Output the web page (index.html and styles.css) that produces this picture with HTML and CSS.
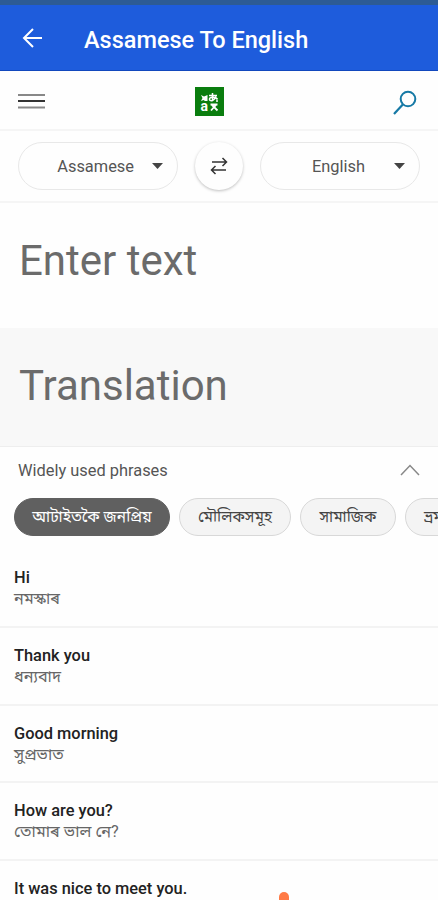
FILE: index.html
```html
<!DOCTYPE html>
<html lang="en">
<head>
    <meta charset="UTF-8">
    <meta name="viewport" content="width=device-width, initial-scale=1.0">
    <title>Assamese To English</title>
    <link rel="stylesheet" href="styles.css">
</head>
<body>

<div class="status-bar"></div>

<header class="app-bar">
    <svg class="back-icon" width="22" height="22" viewBox="0 0 22 22">
        <path d="M20 11H2.500M11 2L2 11l9 9" fill="none" stroke="#fff" stroke-width="2"/>
    </svg>
    <h1>Assamese To English</h1>
</header>

<nav class="top-nav">
    <svg class="menu-icon" width="27" height="18" viewBox="0 0 27 18">
        <path d="M0 3h27M0 15.500h27" stroke="#888" stroke-width="2.200"/>
        <path d="M0 9h27" stroke="#333" stroke-width="2"/>
    </svg>
    <svg class="logo" width="29" height="29" viewBox="0 0 29 29">
        <rect width="29" height="29" fill="#0a7d0e"/>
        <path d="M6 8l3 1.500L12.500 8v6H10l-1.500-1L6 14l1.500-3z" fill="#fff"/>
        <path d="M14 8.500h8M17.500 6v8M21 9.500c-1 4-6 5.500-6.500 3s5.500-3.500 8-.5M22 12.500V15" fill="none" stroke="#fff" stroke-width="1.500"/>
        <text x="5.500" y="23.500" class="logo-text">a</text>
        <path d="M15.500 17.500h7M21 18l-5 5.500M17 18l5.500 5.500" fill="none" stroke="#fff" stroke-width="1.800"/>
    </svg>
    <svg class="search-icon" width="24" height="26" viewBox="0 0 24 26">
        <circle cx="15" cy="9" r="7.300" fill="none" stroke="#1679a5" stroke-width="2"/>
        <path d="M9.800 14.500L1 24" stroke="#1679a5" stroke-width="2.200"/>
    </svg>
</nav>

<div class="languages">
    <div class="select from">
        <span>Assamese</span>
        <svg width="11" height="6" viewBox="0 0 11 6"><path d="M0 0h11L5.500 6z" fill="#444"/></svg>
    </div>
    <div class="swap">
        <svg width="18" height="18" viewBox="0 0 18 18">
            <path d="M2 5h14.500M12.500 1l4 4-4 4M16 13H1.500M5.500 9l-4 4 4 4" fill="none" stroke="#333" stroke-width="1.500"/>
        </svg>
    </div>
    <div class="select to">
        <span>English</span>
        <svg width="11" height="6" viewBox="0 0 11 6"><path d="M0 0h11L5.500 6z" fill="#444"/></svg>
    </div>
</div>

<div class="input-box">Enter text</div>
<div class="output-box">Translation</div>

<section class="phrases">
    <div class="phrases-header">
        <span>Widely used phrases</span>
        <svg width="20" height="12" viewBox="0 0 20 12">
            <path d="M1 11l9-9.500 9 9.500" fill="none" stroke="#888" stroke-width="1.500"/>
        </svg>
    </div>

    <div class="chips">
        <div class="chip active">আটাইতকৈ জনপ্ৰিয়</div>
        <div class="chip basics">মৌলিকসমূহ</div>
        <div class="chip social">সামাজিক</div>
        <div class="chip travel">ভ্ৰমণ</div>
    </div>

    <div class="phrase">
        <b>Hi</b>
        <span>নমস্কাৰ</span>
    </div>
    <div class="phrase">
        <b>Thank you</b>
        <span>ধন্যবাদ</span>
    </div>
    <div class="phrase">
        <b>Good morning</b>
        <span>সুপ্ৰভাত</span>
    </div>
    <div class="phrase">
        <b>How are you?</b>
        <span>তোমাৰ ভাল নে?</span>
    </div>
    <div class="phrase">
        <b>It was nice to meet you.</b>
        <span>আপোনাক লগ পাই ভাল লাগিল।</span>
    </div>
</section>

<div class="marker"></div>

</body>
</html>
```

FILE: styles.css
```css
* {
    box-sizing: border-box;
}

body {
    position: relative;
    height: 900px;
    margin: 0;
    overflow: hidden;
    background-color: #fefefe;
    color: #444;
    font-family: Roboto, "Noto Sans Bengali", "Noto Sans", sans-serif;
    font-size: 16px;
}

svg {
    display: block;
    flex-shrink: 0;
}

.status-bar {
    height: 5px;
    background-color: #2d5b94;
}

.app-bar {
    display: flex;
    align-items: center;
    height: 66px;
    padding: 0 22px;
    background-color: #1e5cdc;
    border-bottom: 1px solid #1248bd;
}

.back-icon {
    margin-top: 1px;
}

.app-bar h1 {
    margin: 4px 0 0 40px;
    color: #fff;
    font-size: 23.5px;
    font-weight: 500;
    white-space: nowrap;
}

.top-nav {
    display: flex;
    align-items: center;
    justify-content: space-between;
    height: 60px;
    padding: 2px 21px 0 18px;
    border-bottom: 2px solid #f5f5f5;
}

.logo {
    position: relative;
    margin-left: -19px;
}

.logo-text {
    fill: #fff;
    font-family: Roboto, sans-serif;
    font-size: 14px;
    font-weight: bold;
}

.search-icon {
    margin-top: 3px;
}

.languages {
    display: flex;
    align-items: center;
    justify-content: space-between;
    height: 72px;
    padding: 0 18px;
    border-bottom: 2px solid #f5f5f5;
}

.select {
    display: flex;
    align-items: center;
    justify-content: flex-end;
    gap: 18px;
    width: 160px;
    height: 48px;
    padding-right: 14px;
    border: 1px solid #e8e8e8;
    border-radius: 24px;
    font-size: 16.4px;
    color: #555;
}

.select.to {
    gap: 29px;
}

.swap {
    display: flex;
    align-items: center;
    justify-content: center;
    width: 48px;
    height: 48px;
    border-radius: 50%;
    box-shadow: 0 1px 3px rgba(0, 0, 0, 0.25);
}

.input-box,
.output-box {
    height: 125px;
    padding: 33px 18px 0 19px;
    color: #6b6b6b;
    font-size: 42px;
    line-height: 50px;
}

.output-box {
    height: 119px;
    background-color: #f8f8f8;
    border-bottom: 1px solid #eee;
}

.phrases-header {
    display: flex;
    align-items: center;
    justify-content: space-between;
    height: 46px;
    padding: 0 18px;
    font-size: 16.4px;
    color: #555;
}

.chips {
    display: flex;
    gap: 9px;
    height: 44px;
    padding: 5px 0 0 14px;
    overflow: hidden;
}

.chip {
    flex-shrink: 0;
    height: 38px;
    border: 1px solid #d8d8d8;
    border-radius: 19px;
    background-color: #f4f4f4;
    color: #444;
    font-size: 15.4px;
    line-height: 36px;
    text-align: center;
    white-space: nowrap;
}

.chip.active {
    width: 156px;
    border-color: #606060;
    background-color: #606060;
    color: #fff;
}

.chip.basics {
    width: 112px;
}

.chip.social {
    width: 96px;
}

.chip.travel {
    width: 80px;
    padding-left: 18px;
    text-align: left;
}

.phrase {
    height: 77.5px;
    padding: 17px 14px 0;
    border-bottom: 2px solid #f3f3f3;
}

.phrases .chips + .phrase {
    height: 91px;
    padding-top: 30px;
}

.phrase b,
.phrase span {
    display: block;
    height: 21px;
    line-height: 21px;
    white-space: nowrap;
}

.phrase b {
    color: #222;
    font-size: 16.4px;
    font-weight: 500;
}

.phrase span {
    color: #666;
    font-size: 16.3px;
}

/* tip of the orange marker at the bottom edge */
.marker {
    position: absolute;
    left: 279px;
    top: 892px;
    width: 10px;
    height: 16px;
    border-radius: 5px;
    background-color: #ff7a45;
}
```
